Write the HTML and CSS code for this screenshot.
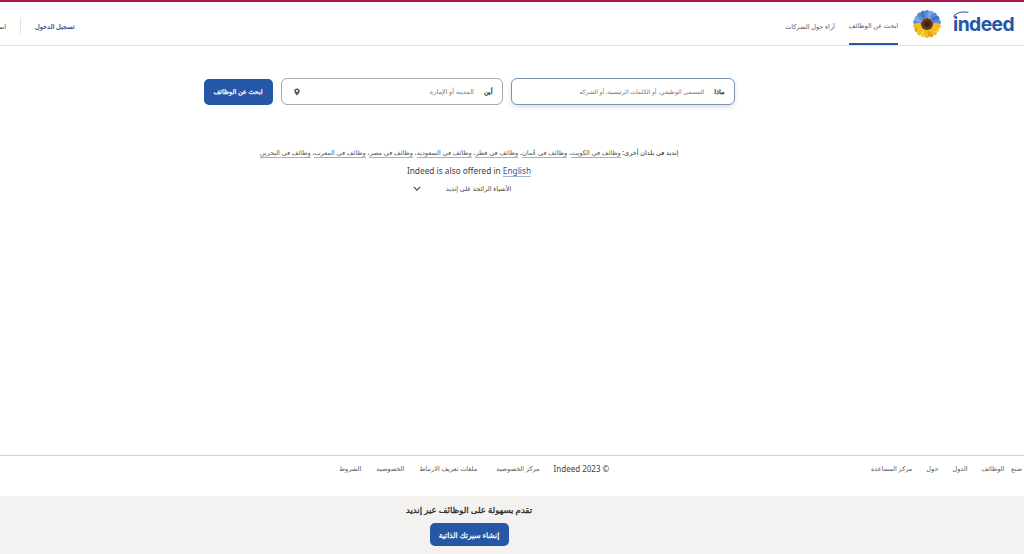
FILE: index.html
```html
<!DOCTYPE html>
<html lang="ar" dir="rtl">
<head>
<meta charset="utf-8">
<title>Indeed</title>
<link rel="stylesheet" href="styles.css">
</head>
<body>
<header class="header">
  <div class="header-start">
    <a class="logo" dir="ltr" href="#"><svg class="logo-arc" viewBox="0 0 16 6" width="16" height="6"><path d="M.8 5.300C3.500 1.500 8 .3 15 1.300" fill="none" stroke="#2557a7" stroke-width="1.100" stroke-linecap="round"/></svg>indeed</a>
    <svg class="flower" viewBox="-14 -14 28 28" width="28" height="28">
      <g fill="#5b8bd6">
        <ellipse cx="0" cy="-10" rx="2.800" ry="4" transform="rotate(-80)"/>
        <ellipse cx="0" cy="-10" rx="2.800" ry="4" transform="rotate(-60)" fill="#7fa6e0"/>
        <ellipse cx="0" cy="-10" rx="2.800" ry="4" transform="rotate(-40)"/>
        <ellipse cx="0" cy="-10" rx="2.800" ry="4" transform="rotate(-20)" fill="#3f74c8"/>
        <ellipse cx="0" cy="-10" rx="2.800" ry="4"/>
        <ellipse cx="0" cy="-10" rx="2.800" ry="4" transform="rotate(20)" fill="#7fa6e0"/>
        <ellipse cx="0" cy="-10" rx="2.800" ry="4" transform="rotate(40)"/>
        <ellipse cx="0" cy="-10" rx="2.800" ry="4" transform="rotate(60)" fill="#3f74c8"/>
        <ellipse cx="0" cy="-10" rx="2.800" ry="4" transform="rotate(80)"/>
      </g>
      <path d="M-10-1H10V3H-10Z" fill="#6f93cf"/>
      <g fill="#f2bd1d">
        <ellipse cx="0" cy="10" rx="2.800" ry="4" transform="rotate(80)"/>
        <ellipse cx="0" cy="10" rx="2.800" ry="4" transform="rotate(60)" fill="#e0a512"/>
        <ellipse cx="0" cy="10" rx="2.800" ry="4" transform="rotate(40)"/>
        <ellipse cx="0" cy="10" rx="2.800" ry="4" transform="rotate(20)" fill="#f7cf3c"/>
        <ellipse cx="0" cy="10" rx="2.800" ry="4"/>
        <ellipse cx="0" cy="10" rx="2.800" ry="4" transform="rotate(-20)" fill="#e0a512"/>
        <ellipse cx="0" cy="10" rx="2.800" ry="4" transform="rotate(-40)"/>
        <ellipse cx="0" cy="10" rx="2.800" ry="4" transform="rotate(-60)" fill="#f7cf3c"/>
        <ellipse cx="0" cy="10" rx="2.800" ry="4" transform="rotate(-80)"/>
      </g>
      <path d="M-10 1H10V7H-10Z" fill="#f2bd1d"/>
      <circle cx="0" cy="0" r="6" fill="#5f3a1c"/>
      <circle cx="0" cy="0" r="3" fill="#3e2411"/>
    </svg>
    <nav class="nav">
      <a class="nav-link active" href="#">ابحث عن الوظائف</a>
      <a class="nav-link" href="#">آراء حول الشركات</a>
    </nav>
  </div>
  <div class="header-end">
    <a class="signin" href="#">تسجيل الدخول</a>
    <span class="divider"></span>
    <a class="employers" href="#">استقطب المواهب</a>
  </div>
</header>

<main class="main">
  <form class="search">
    <label class="field field-what"><b class="strong">ماذا</b><span class="hint">المسمى الوظيفي، أو الكلمات الرئيسية، أو الشركة</span></label>
    <label class="field field-where"><b class="strong">أين</b><span class="hint">المدينة أو الإمارة</span>
      <svg class="pin" viewBox="0 0 10 12" width="6" height="8"><path fill-rule="evenodd" d="M5 0a4.500 4.500 0 0 0-4.500 4.500C.5 7.500 5 12 5 12s4.500-4.500 4.500-7.500A4.500 4.500 0 0 0 5 0Zm0 6.200a1.700 1.700 0 1 1 0-3.400 1.700 1.700 0 0 1 0 3.400Z" fill="#595959"/></svg>
    </label>
    <button class="primary search-btn" type="button">ابحث عن الوظائف</button>
  </form>

  <p class="countries">إنديد في بلدان أخرى: <a href="#">وظائف في الكويت</a>، <a href="#">وظائف في عُمان</a>، <a href="#">وظائف في قطر</a>، <a href="#">وظائف في السعودية</a>، <a href="#">وظائف في مصر</a>، <a href="#">وظائف في المغرب</a>، <a href="#">وظائف في البحرين</a></p>
  <p class="lang" dir="ltr">Indeed is also offered in <a href="#">English</a></p>
  <div class="trending"><span>الأشياء الرائجة على إنديد</span>
    <svg viewBox="0 0 10 6" width="8" height="5"><path d="M1 1l4 4 4-4" fill="none" stroke="#424242" stroke-width="1.400"/></svg>
  </div>
</main>

<footer class="footer">
  <div class="footer-links">
    <a class="footer-first" href="#">صنع الوظائف</a><a href="#">الدول</a><a href="#">حول</a><a href="#">مركز المساعدة</a>
  </div>
  <div class="footer-legal">
    <span class="copy">© 2023 Indeed</span><a class="privacy-center" href="#">مركز الخصوصية</a><a href="#">ملفات تعريف الارتباط</a><a href="#">الخصوصية</a><a href="#">الشروط</a>
  </div>
</footer>

<section class="banner">
  <strong class="banner-title">تقدم بسهولة على الوظائف عبر إنديد</strong>
  <button class="primary banner-btn" type="button">إنشاء سيرتك الذاتية</button>
</section>
</body>
</html>
```

FILE: styles.css
```css
* { box-sizing: border-box; }
html, body { margin: 0; height: 100%; }
body {
  width: 1024px;
  height: 554px;
  overflow: hidden;
  display: flex;
  flex-direction: column;
  background: #fff;
  color: #2d2d2d;
  font-family: "Noto Sans", "DejaVu Sans", sans-serif;
  font-size: 6.500px;
}
a { color: inherit; text-decoration: none; }
p { margin: 0; }

.header {
  flex: none;
  height: 46px;
  border-top: 2.500px solid #a6154f;
  border-bottom: 1px solid #e4e2e0;
  display: flex;
  justify-content: space-between;
  align-items: stretch;
  padding-right: 10px;
}
.header-start, .header-end, .nav { display: flex; align-items: center; }
.logo {
  position: relative;
  font-family: "Inter", "Liberation Sans", sans-serif;
  font-weight: 700;
  font-size: 19.300px;
  letter-spacing: -0.6px;
  color: #2557a7;
  margin-left: 12px;
}
.logo-arc { position: absolute; left: 0; top: -1px; }
.flower { flex: none; margin-left: 15px; }
.nav { align-self: stretch; gap: 14px; }
.nav-link { height: 100%; display: flex; align-items: center; padding-top: 5px; color: #595959; }
.nav-link.active { border-bottom: 2px solid #2557a7; }

.header-end { padding-top: 5px; color: #2557a7; }
.signin { color: #1f4a8c; -webkit-text-stroke: 0.2px #1f4a8c; }
.divider { width: 1px; height: 16px; background: #e4e2e0; margin: 0 14px; }
.employers { width: 6px; overflow: hidden; color: #424242; white-space: nowrap; }

.main {
  flex: 1;
  padding: 32px 86px 0 0;
  display: flex;
  flex-direction: column;
  align-items: center;
}
.search { display: flex; align-items: center; gap: 8px; }
.field {
  display: flex;
  align-items: center;
  gap: 10px;
  height: 27px;
  border-radius: 6px;
  border: 1px solid #a8a8a8;
  padding: 0 9px;
  background: #fff;
}
.strong { font-weight: 400; color: #2d2d2d; -webkit-text-stroke: 0.25px #2d2d2d; }
.hint { color: #767676; }
.field-what {
  width: 224px;
  border-color: #7f93ad;
  box-shadow: 0 2px 5px rgba(37, 87, 167, 0.18);
}
.field-what .hint { font-size: 6.100px; }
.field-where { width: 222px; }
.pin { margin-right: auto; margin-left: 3px; }
.primary {
  border: 0;
  border-radius: 5px;
  background: #2557a7;
  color: #fff;
  font: inherit;
  padding: 0;
  -webkit-text-stroke: 0.25px #fff;
}
.search-btn { width: 69px; height: 26px; }

.countries { margin-top: 42px; color: #2d2d2d; line-height: 12px; white-space: nowrap; }
.countries a { color: #595959; border-bottom: 1px solid #9fb0cc; }
.lang { margin-top: 5px; font-size: 8.300px; line-height: 13px; color: #424242; }
.lang a { color: #2557a7; border-bottom: 1px solid #9fb4d6; }
.trending { margin: 5px 14px 0 0; display: flex; align-items: center; gap: 25px; line-height: 13px; color: #424242; }

.footer {
  flex: none;
  height: 41px;
  border-top: 1px solid #d4d2d0;
  display: flex;
  justify-content: space-between;
  padding: 7px 2px 0 0;
  color: #595959;
  line-height: 12px;
}
.footer-links, .footer-legal { display: flex; gap: 15px; }
.footer-links { gap: 14px; }
.footer-first { word-spacing: 5px; }
.footer-legal { margin-left: 339px; }
.copy { font-size: 8px; color: #424242; margin-left: -1px; }
.privacy-center { margin-left: 4px; }

.banner {
  flex: none;
  height: 58px;
  background: #f3f2f1;
  padding: 7px 86px 0 0;
  display: flex;
  flex-direction: column;
  align-items: center;
  gap: 6px;
}
.banner-title { font-size: 8.500px; font-weight: 400; line-height: 14px; color: #2d2d2d; -webkit-text-stroke: 0.3px #2d2d2d; }
.banner-btn { width: 79px; height: 23px; font-size: 7.500px; }
```
